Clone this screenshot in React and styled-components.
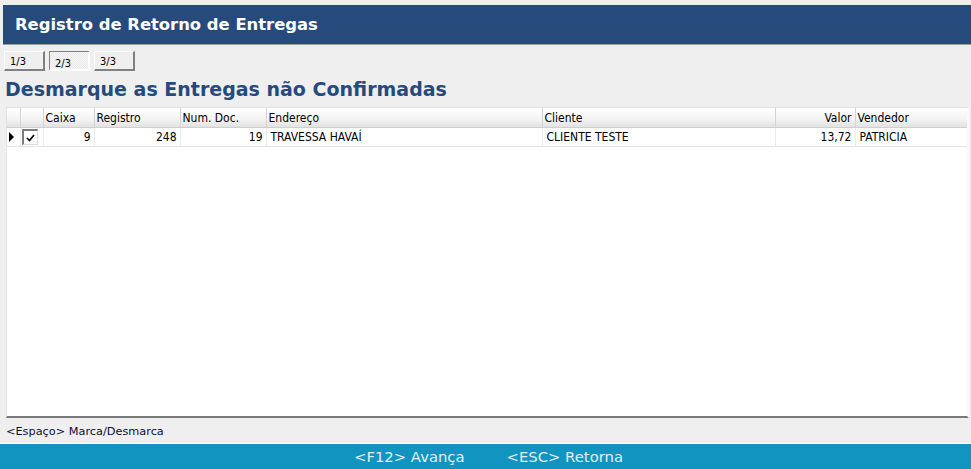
import React from "react";
import styled, { createGlobalStyle } from "styled-components";

const GlobalStyle = createGlobalStyle`
  html, body {
    margin: 0;
    padding: 0;
    background: #efefef;
  }
  body {
    font-family: "DejaVu Sans Condensed", "DejaVu Sans", sans-serif;
  }
`;

const columns = [
  { key: "ind", label: "", width: 13 },
  { key: "chk", label: "", width: 23 },
  { key: "caixa", label: "Caixa", width: 51, align: "right" },
  { key: "registro", label: "Registro", width: 86, align: "right" },
  { key: "numDoc", label: "Num. Doc.", width: 86, align: "right" },
  { key: "endereco", label: "Endereço", width: 276 },
  { key: "cliente", label: "Cliente", width: 233 },
  { key: "valor", label: "Valor", width: 80, align: "right", headAlign: "right" },
  { key: "vendedor", label: "Vendedor" },
];

const rows = [
  {
    caixa: "9",
    registro: "248",
    numDoc: "19",
    endereco: "TRAVESSA HAVAÍ",
    cliente: "CLIENTE TESTE",
    valor: "13,72",
    vendedor: "PATRICIA",
    checked: true,
  },
];

function App() {
  return (
    <Page>
      <GlobalStyle />
      <TitleBar>
        <Title>Registro de Retorno de Entregas</Title>
      </TitleBar>
      <Tabs>
        <TabButton>1/3</TabButton>
        <TabButton $pressed>2/3</TabButton>
        <TabButton>3/3</TabButton>
      </Tabs>
      <Heading>Desmarque as Entregas não Confirmadas</Heading>
      <GridFrame>
        <Table>
          <colgroup>
            {columns.map((c) => (
              <col key={c.key} style={c.width ? { width: c.width } : undefined} />
            ))}
          </colgroup>
          <thead>
            <tr>
              {columns.map((c) => (
                <Th key={c.key} $align={c.headAlign}>
                  {c.label}
                </Th>
              ))}
            </tr>
          </thead>
          <tbody>
            {rows.map((r, i) => (
              <tr key={i}>
                <Td>
                  <Arrow />
                </Td>
                <Td>
                  <CheckBox>{r.checked ? <CheckMark /> : null}</CheckBox>
                </Td>
                {columns.slice(2).map((c) => (
                  <Td key={c.key} $align={c.align}>
                    {r[c.key]}
                  </Td>
                ))}
              </tr>
            ))}
          </tbody>
        </Table>
      </GridFrame>
      <Hint>&lt;Espaço&gt; Marca/Desmarca</Hint>
      <BottomBar>
        <KeyHint>&lt;F12&gt; Avança</KeyHint>
        <KeyHint>&lt;ESC&gt; Retorna</KeyHint>
      </BottomBar>
    </Page>
  );
}

function CheckMark() {
  return (
    <svg width="9" height="8" viewBox="0 0 9 8">
      <path d="M1 4 L3.5 6.5 L8 1" fill="none" stroke="#000" strokeWidth="1.6" />
    </svg>
  );
}

export default App;

const Page = styled.div`
  height: 469px;
  display: flex;
  flex-direction: column;
  padding-top: 5px;
  box-sizing: border-box;
`;

const TitleBar = styled.div`
  margin-left: 3px;
  height: 39px;
  background: #264a7c;
  border-bottom: 1px solid #9c9c9c;
  display: flex;
  align-items: center;
  padding-left: 12px;
`;

const Title = styled.h1`
  margin: 0;
  color: #fff;
  font-family: "DejaVu Sans", sans-serif;
  font-weight: bold;
  font-size: 16.4px;
`;

const Tabs = styled.div`
  display: flex;
  gap: 4px;
  padding: 6px 0 0 4px;
`;

const TabButton = styled.div`
  width: 41px;
  height: 20px;
  box-sizing: border-box;
  font-size: 11px;
  padding: 3px 0 0 5px;
  color: #000;
  background: ${(p) =>
    p.$pressed
      ? "repeating-conic-gradient(#f7f7f7 0 25%, #e9e9e9 0 50%) 0 0 / 2px 2px"
      : "#efefef"};
  border-style: solid;
  border-width: 1px 2px 2px 1px;
  border-color: ${(p) =>
    p.$pressed ? "#808080 #fff #fff #808080" : "#fff #808080 #808080 #fff"};
  padding-top: ${(p) => (p.$pressed ? "5px" : "3px")};
`;

const Heading = styled.h2`
  margin: 6px 0 6px 5px;
  color: #264a7c;
  font-family: "DejaVu Sans", sans-serif;
  font-weight: bold;
  font-size: 19px;
  line-height: 24px;
`;

const GridFrame = styled.div`
  flex: 1;
  margin: 0 2px 0 6px;
  background: #fff;
  border-top: 1px solid #e2e2e2;
  border-left: 1px solid #e2e2e2;
  border-right: 2px solid #fafafa;
  border-bottom: 2px solid #7a7a7a;
  overflow: hidden;
`;

const Table = styled.table`
  width: 964px;
  border-collapse: collapse;
  table-layout: fixed;
  font-size: 12px;
  color: #000;
`;

const Th = styled.th`
  height: 19px;
  padding: 0 3px 0 2px;
  font-weight: normal;
  text-align: ${(p) => p.$align || "left"};
  background: linear-gradient(#ffffff, #f3f3f3 60%, #e2e2e2);
  border-right: 1px solid #d5d5d5;
  border-bottom: 1px solid #cfcfcf;
  white-space: nowrap;
  overflow: hidden;
`;

const Td = styled.td`
  height: 18px;
  padding: 0 3px 0 4px;
  text-align: ${(p) => p.$align || "left"};
  border-right: 1px solid #ececec;
  border-bottom: 1px solid #e6e6e6;
  white-space: nowrap;
  overflow: hidden;
`;

const Arrow = styled.span`
  display: block;
  width: 0;
  height: 0;
  border-top: 5px solid transparent;
  border-bottom: 5px solid transparent;
  border-left: 5px solid #000;
  margin-left: -2px;
`;

const CheckBox = styled.span`
  display: flex;
  align-items: center;
  justify-content: center;
  width: 16px;
  height: 16px;
  box-sizing: border-box;
  margin-left: -3px;
  background: #fff;
  border-style: solid;
  border-width: 2px 1px 1px 2px;
  border-color: #7c7c7c #dcdcdc #dcdcdc #7c7c7c;
`;

const Hint = styled.div`
  font-family: "DejaVu Sans", sans-serif;
  font-size: 11.3px;
  color: #101030;
  padding: 7px 0 0 6px;
  height: 18px;
  border-bottom: 1px solid #fff;
`;

const BottomBar = styled.div`
  height: 25px;
  background: #1195c0;
  display: flex;
  justify-content: center;
  align-items: center;
  gap: 42px;
  padding-left: 6px;
`;

const KeyHint = styled.span`
  color: #e4eef3;
  font-family: "DejaVu Sans", sans-serif;
  font-size: 14.8px;
`;
